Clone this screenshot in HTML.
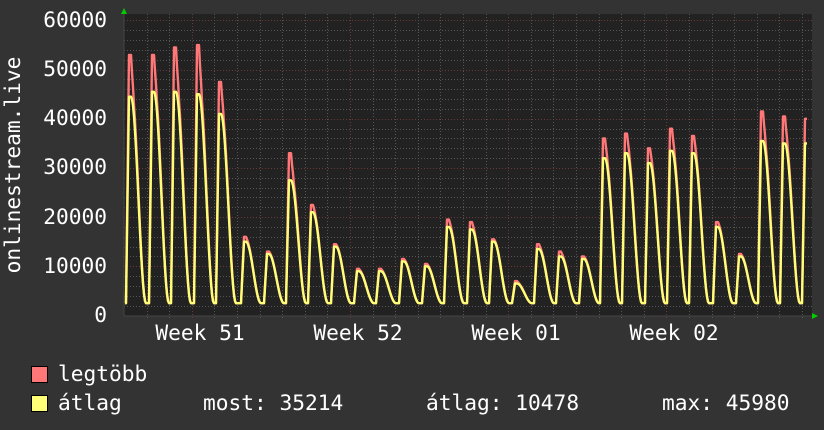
<!DOCTYPE html>
<html><head><meta charset="utf-8"><style>
html,body{margin:0;padding:0;background:#333;width:824px;height:430px;overflow:hidden}
svg{display:block}
text{font-family:"DejaVu Sans Mono","Liberation Mono",monospace;fill:#fff}
</style></head><body>
<svg id="s" width="824" height="430" xmlns="http://www.w3.org/2000/svg">
<rect width="824" height="430" fill="#333"/>
<rect x="124" y="14" width="688" height="302" fill="#222"/>
<g id="grid"></g>
<path id="mx" fill="none" stroke="#ff7777" stroke-width="2.4" stroke-linejoin="round"/>
<path id="av" fill="none" stroke="#ffff77" stroke-width="2.4" stroke-linejoin="round"/>
<line x1="124" y1="10" x2="124" y2="316" stroke="#444" stroke-width="1"/>
<line x1="124" y1="316" x2="814" y2="316" stroke="#444" stroke-width="1"/>
<polygon points="121,14 127,14 124,8" fill="#0c0"/>
<polygon points="812,313 812,319 818,316" fill="#0c0"/>
<g font-size="21.2" text-anchor="end">
<text x="107" y="27">60000</text>
<text x="107" y="76">50000</text>
<text x="107" y="125">40000</text>
<text x="107" y="174">30000</text>
<text x="107" y="224">20000</text>
<text x="107" y="273">10000</text>
<text x="107" y="322">0</text>
</g>
<text x="20" y="165" font-size="21.2" text-anchor="middle" transform="rotate(-90 20 165)">onlinestream.live</text>
<g font-size="21.2" text-anchor="middle">
<text x="200" y="340">Week 51</text>
<text x="358" y="340">Week 52</text>
<text x="516" y="340">Week 01</text>
<text x="674" y="340">Week 02</text>
</g>
<rect x="31.5" y="366.5" width="16" height="16" fill="#ff7777" stroke="#000"/>
<rect x="31.5" y="395.5" width="16" height="16" fill="#ffff77" stroke="#000"/>
<g font-size="21.2">
<text x="58" y="381">legtöbb</text>
<text x="58" y="410">átlag</text>
<text x="203" y="410">most: 35214</text>
<text x="426" y="410">átlag: 10478</text>
<text x="662" y="410">max: 45980</text>
</g>
</svg>
<script>
var ns="http://www.w3.org/2000/svg",g=document.getElementById("grid");
function ln(x1,y1,x2,y2,c){var l=document.createElementNS(ns,"line");l.setAttribute("x1",x1);l.setAttribute("y1",y1);l.setAttribute("x2",x2);l.setAttribute("y2",y2);l.setAttribute("stroke",c);l.setAttribute("stroke-width","1");l.setAttribute("stroke-dasharray","1,2");g.appendChild(l);}
function Y(v){return 315.5-v*0.004917;}
for(var v=2000;v<=60000;v+=2000){var y=Math.round(Y(v))+0.5;ln(124,y,812,y,v%10000==0?"#6a3a3a":"#555");}
for(var i=0;i<31;i++){var x=Math.round(146.5+i*22.6)+0.5;ln(x,14,x,318,((i-2)%7==0)?"#6a3a3a":"#555");}
var P=[129,152,174,197,219,244,267,289,311,334,357,379,402,425,447,470,492,515,537,559,582,603,625,648,670,692,716,739,761,783,805];
var M=[53000,53000,54500,55000,47500,16000,13000,33000,22500,14500,9500,9500,11500,10500,19500,19000,15500,7000,14500,13000,12000,36000,37000,34000,38000,36500,19000,12500,41500,40500,40000];
var A=[44500,45500,45500,45000,41000,15000,12500,27500,21000,14000,9000,9000,11000,10000,18000,17500,15000,6500,13500,12000,11500,32000,33000,31000,33500,33000,18000,12000,35500,35000,35000];
function val(x,arr,avg,isMax){var best=2500;for(var i=0;i<P.length;i++){var d=x-P[i];var f,pk=arr[i];
 if(d<-3||d>18)continue;
 if(d<0)f=1+d/3; else if(d<=2)f=1; else {
   var t=(d-2)/15; if(t>1)t=1; f=0.5*(1+Math.cos(Math.PI*t));
   if(isMax){pk=avg[i]+ (arr[i]-avg[i])*Math.max(0,1-(d-2)/3)*0.5+ (arr[i]-avg[i])*0.3;}
 }
 if(f<0)f=0;var v=2500+(pk-2500)*f;if(v>best)best=v;}
 return best;}
function path(arr,end,isMax){var s="";for(var x=125;x<=end;x++){s+=(x==125?"M":"L")+x+","+Y(val(x,arr,A,isMax)).toFixed(1);}return s;}
document.getElementById("mx").setAttribute("d",path(M,807,true));
document.getElementById("av").setAttribute("d",path(A,807,false));
</script>
</body></html>
